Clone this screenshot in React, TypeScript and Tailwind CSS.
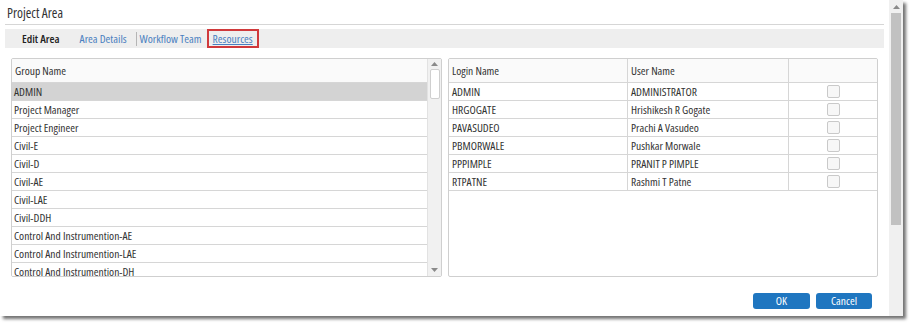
import React from "react";

const groups = [
  "ADMIN",
  "Project Manager",
  "Project Engineer",
  "Civil-E",
  "Civil-D",
  "Civil-AE",
  "Civil-LAE",
  "Civil-DDH",
  "Control And Instrumention-AE",
  "Control And Instrumention-LAE",
  "Control And Instrumention-DH",
];

const users = [
  ["ADMIN", "ADMINISTRATOR"],
  ["HRGOGATE", "Hrishikesh R Gogate"],
  ["PAVASUDEO", "Prachi A Vasudeo"],
  ["PBMORWALE", "Pushkar Morwale"],
  ["PPPIMPLE", "PRANIT P PIMPLE"],
  ["RTPATNE", "Rashmi T Patne"],
];

function UpArrow() {
  return (
    <svg width="7" height="4" viewBox="0 0 7 4">
      <path d="M0 4 L3.5 0 L7 4 Z" fill="#8a8a8a" />
    </svg>
  );
}
function DownArrow() {
  return (
    <svg width="7" height="4" viewBox="0 0 7 4">
      <path d="M0 0 L3.5 4 L7 0 Z" fill="#8a8a8a" />
    </svg>
  );
}

export default function App() {
  return (
    <div className="w-[915px] h-[327px] bg-white text-[#333] font-['Open_Sans','Noto_Sans',sans-serif] font-stretch-[80%] overflow-hidden">
      <div className="w-[903px] h-[316px] bg-white flex shadow-[3px_3px_3px_rgba(0,0,0,0.55)]">
        <div className="flex-1 flex flex-col">
          {/* Title */}
          <div className="mx-[5px] h-[25px] border-b border-[#d6d6d6] pl-[2px] pt-[5px] text-[13.5px] leading-[16px] text-[#333]">
            Project Area
          </div>
          {/* Tabs */}
          <div className="mx-[5px] mt-[4px] h-[19px] bg-[#eeeeee] flex items-center text-[11.5px] leading-[14px]">
            <span className="ml-[17px] font-semibold text-[#222]">Edit Area</span>
            <span className="ml-[20px] text-[#4a7fc0]">Area Details</span>
            <span className="ml-[9px] w-px h-[14px] bg-[#b5b5b5]" />
            <span className="ml-[3px] text-[#4a7fc0]">Workflow Team</span>
            <span className="ml-[5px] h-[19px] px-[4px] border-2 border-[#d0393b] flex items-center">
              <span className="text-[#4a7fc0] underline">Resources</span>
            </span>
          </div>
          {/* Grids */}
          <div className="mt-[10px] flex ml-[11px] gap-[6px] text-[11.5px] leading-[14px]">
            {/* Left grid */}
            <div className="w-[431px] h-[219px] border border-[#cfcfcf] rounded-[2px] flex overflow-hidden">
              <div className="flex-1 flex flex-col">
                <div className="h-[24px] shrink-0 flex items-center pl-[3px] bg-[#fafafa] border-b border-[#d6d6d6]">
                  Group Name
                </div>
                {groups.map((g, i) => (
                  <div
                    key={g}
                    className={
                      "h-[18px] shrink-0 flex items-center pl-[2px] border-b border-[#d6d6d6] " +
                      (i === 0 ? "bg-[#d3d3d3]" : "bg-white")
                    }
                  >
                    {g}
                  </div>
                ))}
              </div>
              <div className="w-[14px] bg-[#f1f1f1] border-l border-[#e2e2e2] flex flex-col items-center">
                <div className="h-[10px] flex items-center">
                  <UpArrow />
                </div>
                <div className="w-[10px] h-[30px] bg-white border border-[#cfcfcf] rounded-[2px]" />
                <div className="flex-1" />
                <div className="h-[12px] flex items-center">
                  <DownArrow />
                </div>
              </div>
            </div>
            {/* Right grid */}
            <div className="w-[430px] h-[219px] border border-[#cfcfcf] rounded-[2px] flex flex-col overflow-hidden">
              <div className="h-[24px] shrink-0 flex bg-[#fafafa] border-b border-[#d6d6d6]">
                <div className="w-[179px] pl-[3px] flex items-center border-r border-[#d6d6d6]">Login Name</div>
                <div className="w-[161px] pl-[3px] flex items-center border-r border-[#d6d6d6]">User Name</div>
                <div className="flex-1" />
              </div>
              {users.map(([l, u]) => (
                <div key={l} className="h-[18px] shrink-0 flex border-b border-[#d6d6d6]">
                  <div className="w-[179px] pl-[3px] flex items-center border-r border-[#d6d6d6]">{l}</div>
                  <div className="w-[161px] pl-[3px] flex items-center border-r border-[#d6d6d6]">{u}</div>
                  <div className="flex-1 flex items-center justify-center">
                    <div className="w-[13px] h-[13px] rounded-[2px] border border-[#c9c9c9] bg-[#f7f7f7]" />
                  </div>
                </div>
              ))}
            </div>
          </div>
          {/* Buttons */}
          <div className="mt-[16px] flex justify-end gap-[6px] pr-[17px] text-[11.5px]">
            <button className="w-[57px] h-[16px] rounded-[3px] bg-[#1f76c0] text-white leading-[16px]">OK</button>
            <button className="w-[56px] h-[16px] rounded-[3px] bg-[#1f76c0] text-white leading-[16px]">Cancel</button>
          </div>
        </div>
        {/* Dialog scrollbar */}
        <div className="w-[14px] bg-[#f0f0f0] flex flex-col items-center">
          <div className="h-[13px] flex items-center">
            <UpArrow />
          </div>
          <div className="w-[10px] h-[212px] bg-[#c1c1c1]" />
        </div>
      </div>
    </div>
  );
}
